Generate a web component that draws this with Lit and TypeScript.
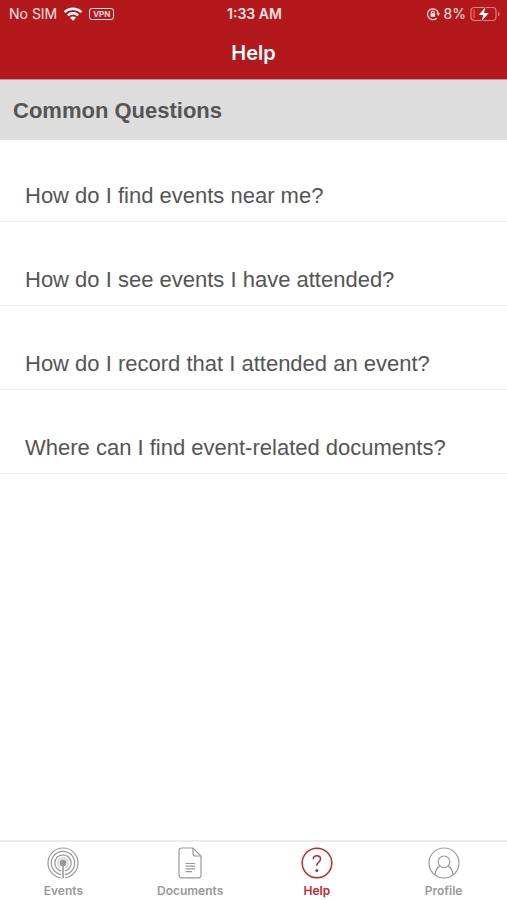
import { LitElement, html, css, svg } from "lit";
import { customElement, state } from "lit/decorators.js";
import { classMap } from "lit/directives/class-map.js";

const QUESTIONS = [
  "How do I find events near me?",
  "How do I see events I have attended?",
  "How do I record that I attended an event?",
  "Where can I find event-related documents?",
];

const TABS = [
  {
    name: "Events",
    icon: svg`
      <circle cx="16" cy="16" r="15"/><circle cx="16" cy="16" r="11.7"/>
      <circle cx="16" cy="16" r="8.2"/><circle cx="16" cy="16" r="5.2" opacity=".5"/>
      <path d="M16 16v15.500" stroke="#fff" stroke-width="4"/>
      <circle cx="16" cy="16" r="3.4" fill="currentColor" stroke="none"/>
      <path d="M16 16v15" stroke-width="1.6"/>`,
  },
  {
    name: "Documents",
    icon: svg`
      <path d="M7.800 1H19L27 9V28a2.800 2.800 0 0 1-2.800 2.800H7.800A2.800 2.800 0 0 1 5 28V3.800A2.800 2.800 0 0 1 7.800 1"/>
      <path d="M19 1V6.500A2.500 2.500 0 0 0 21.500 9H27"/>
      <path d="M11.500 16.500h9.500M11.500 19.200h9.500M11.500 21.900h9.500M11.500 24.600h6.500"/>`,
  },
  {
    name: "Help",
    icon: svg`
      <circle cx="16" cy="16" r="14.800" stroke-width="1.500"/>
      <path d="M12.300 12.300C12.300 10 13.700 8.700 15.900 8.700c2.100 0 3.600 1.300 3.600 3.300 0 1.600-.8 2.400-1.900 3.300-1.200.9-1.800 1.500-1.800 2.900v.6" stroke-width="1.500"/>
      <circle cx="15.800" cy="23.600" r="1.500" fill="currentColor" stroke="none"/>`,
  },
  {
    name: "Profile",
    icon: svg`
      <circle cx="16" cy="16" r="15"/><circle cx="16" cy="14.800" r="5.800"/>
      <path d="M7 28c.4-4.500 2.300-7.600 5.300-9.100M25 28c-.4-4.500-2.300-7.600-5.300-9.100"/>`,
  },
];

@customElement("app-root")
export class AppRoot extends LitElement {
  @state() private current = "Help";

  static styles = css`
    :host {
      display: flex;
      flex-direction: column;
      min-height: 100vh;
      background: #fff;
      color: #555;
      font-family: Inter, "Liberation Sans", sans-serif;
    }
    .top {
      background: #b3191c;
      color: #fff;
      border-bottom: 1px solid #d88b8c;
    }
    .status {
      display: grid;
      grid-template-columns: 1fr auto 1fr;
      align-items: center;
      height: 27px;
      padding: 0 7px 0 9px;
      font-size: 14px;
      color: #fbe4e2;
    }
    .side {
      display: flex;
      align-items: center;
      gap: 6px;
    }
    .end {
      justify-content: flex-end;
      gap: 4px;
    }
    .time {
      font-weight: 600;
    }
    .vpn {
      border: 1px solid currentColor;
      border-radius: 3px;
      padding: 0 3px;
      font-size: 8px;
      line-height: 10px;
      font-weight: 600;
    }
    .title {
      margin: 0;
      padding: 14px 0;
      font-size: 20px;
      line-height: 24px;
      font-weight: 600;
      text-align: center;
    }
    .section {
      margin: 0;
      padding: 17px 13px 15px;
      background: #ddd;
      font: bold 22px/28px "Liberation Sans", sans-serif;
    }
    .list {
      display: flex;
      flex-direction: column;
      gap: 2px;
      margin: 0;
      padding: 0;
      list-style: none;
      flex: 1;
    }
    .question {
      display: block;
      box-sizing: border-box;
      width: 100%;
      padding: 42px 25px 11px;
      border: 0;
      border-bottom: 1px solid #f0f0f0;
      background: none;
      color: inherit;
      font: 22px/28px "Liberation Sans", sans-serif;
      text-align: left;
    }
    .tabs {
      display: grid;
      grid-template-columns: repeat(4, 1fr);
      border-top: 2px solid #ebebeb;
      padding: 5px 0 2px;
    }
    .tab {
      display: flex;
      flex-direction: column;
      align-items: center;
      gap: 4px;
      padding: 0;
      border: 0;
      background: none;
      color: #999;
      font: 600 12px/15px Inter, sans-serif;
    }
    .active {
      color: #c1272d;
    }
    .glyph {
      display: block;
      fill: none;
      stroke: currentColor;
      stroke-width: 1.2;
    }
  `;

  render() {
    return html`
      <header class="top">
        <div class="status">
          <div class="side">
            <span>No SIM</span>
            <svg width="20" height="14" viewBox="0 0 20 14" fill="none" stroke="#fff" stroke-width="2.400" aria-label="Wi-Fi">
              <path d="M1.500 5.200a12.200 12.200 0 0 1 17 0M4.800 8.400a7.500 7.500 0 0 1 10.400 0"/>
              <path d="M10 13.800L7 10.800a4.200 4.200 0 0 1 6 0z" fill="#fff" stroke="none"/>
            </svg>
            <span class="vpn">VPN</span>
          </div>
          <span class="time">1:33 AM</span>
          <div class="side end">
            <svg width="14" height="14" viewBox="0 0 14 14" fill="none" stroke="currentColor" stroke-width="1.200" aria-label="Rotation lock">
              <path d="M10.600 11.200A5.400 5.400 0 1 1 12.300 6.600"/>
              <path d="M10.300 6.300h3.700l-1.800 2.600z" fill="currentColor" stroke="none"/>
              <rect x="4.500" y="6.200" width="4.600" height="3.600" rx=".5" fill="currentColor" stroke="none"/>
              <path d="M5.500 6.500V5.300a1.300 1.300 0 0 1 2.600 0v1.200"/>
            </svg>
            <span>8%</span>
            <svg width="30" height="16" viewBox="0 0 30 16" aria-label="Battery charging">
              <rect x="1" y="1.500" width="25" height="13" rx="3.500" fill="none" stroke="#d98280" stroke-width="1.200"/>
              <path d="M28 5.500c2 .8 2 4.200 0 5z" fill="#d98280"/>
              <path d="M4 3.500h1v9H4a1.200 1.200 0 0 1-1.200-1.200V4.700A1.200 1.200 0 0 1 4 3.500z" fill="#f23a38"/>
              <path d="M15.500 1L8.700 9h4.600l-1.800 6.200L18.700 7h-4.800z" fill="#fff" stroke="#b3191c" stroke-width="1" paint-order="stroke"/>
            </svg>
          </div>
        </div>
        <h1 class="title">Help</h1>
      </header>
      <h2 class="section">Common Questions</h2>
      <ul class="list">
        ${QUESTIONS.map((q) => html`<li><button class="question">${q}</button></li>`)}
      </ul>
      <nav class="tabs">
        ${TABS.map(
          (t) => html`<button
            class=${classMap({ tab: true, active: t.name === this.current })}
            @click=${() => (this.current = t.name)}
          >
            <svg class="glyph" width="32" height="32" viewBox="0 0 32 32" aria-hidden="true">${t.icon}</svg>
            <span>${t.name}</span>
          </button>`
        )}
      </nav>
    `;
  }
}
